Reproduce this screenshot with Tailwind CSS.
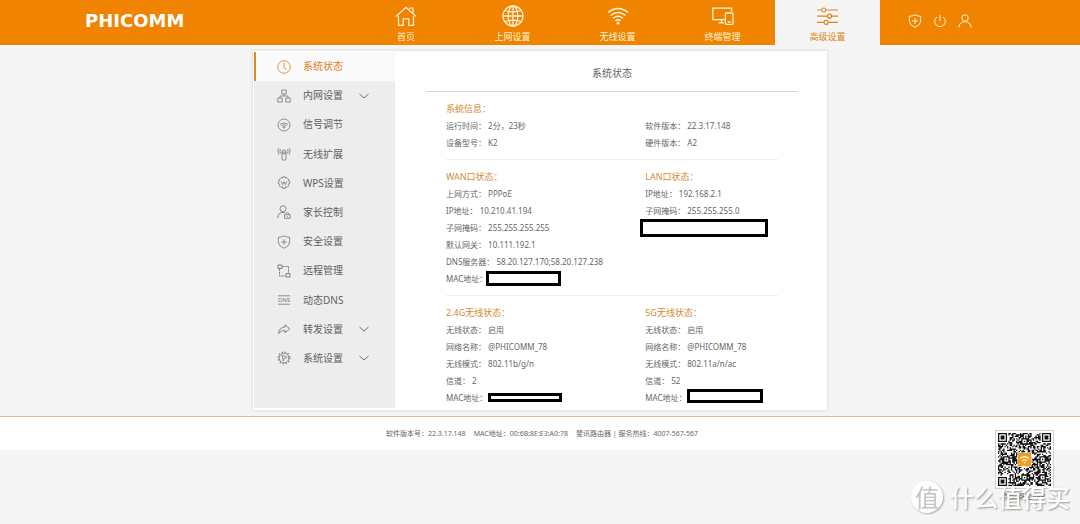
<!DOCTYPE html>
<html lang="zh-CN">
<head>
<meta charset="utf-8">
<meta name="viewport" content="width=device-width, initial-scale=1">
<title>PHICOMM 系统状态</title>
<script src="https://cdn.jsdelivr.net/npm/@tailwindcss/browser@4"></script>
</head>
<body class="relative min-h-screen overflow-x-hidden bg-[#f5f5f5] font-['Noto_Sans','Noto_Sans_CJK_SC',sans-serif] text-[8px] text-[#666]">

<header class="flex h-[45px] bg-[#f08300] text-[#fff3d6]">
  <a href="#" class="flex min-w-0 flex-1 items-center justify-start pb-1 pl-[85px] font-['DejaVu_Sans',sans-serif] text-[18px] leading-none font-bold text-white">PHICOMM</a>
  <nav class="flex text-[9px] leading-3" aria-label="主导航">
    <a href="#" class="flex w-[105px] flex-col items-center gap-1 pt-[5px] pr-[3px]">
      <svg class="size-[22px]" viewBox="0 0 22 22" fill="none" stroke="currentColor" stroke-width="1.2" aria-hidden="true"><path d="M1 11.500 11 2.200 21 11.500M15 4V3h3v5.500M3.500 11v9.400h4.700v-6.600h5.600v6.600h4.700V11"/></svg>
      首页</a>
    <a href="#" class="flex w-[105px] flex-col items-center gap-1 pt-[5px]">
      <svg class="size-[22px]" viewBox="0 0 22 22" fill="none" stroke="currentColor" stroke-width="1.300" aria-hidden="true"><circle cx="11" cy="11" r="10"/><ellipse cx="11" cy="11" rx="4.800" ry="10"/><path d="M11 1v20M1 11h20M3 5.500q8 2.800 16 0M3 16.500q8-2.800 16 0"/></svg>
      上网设置</a>
    <a href="#" class="flex w-[105px] flex-col items-center gap-1 pt-[5px]">
      <svg class="size-[22px]" viewBox="0 0 22 22" fill="none" stroke="currentColor" stroke-width="1.400" aria-hidden="true"><path d="M1 7.500Q11-.5 21 7.500M3.500 10.500q7.500-6 15 0M6 13.300q5-4 10 0M8.300 15.800q2.700-2.100 5.400 0"/><circle cx="11" cy="18" r=".8" fill="currentColor"/></svg>
      无线设置</a>
    <a href="#" class="flex w-[105px] flex-col items-center gap-1 pt-[5px]">
      <svg class="size-[22px]" viewBox="0 0 22 22" fill="none" stroke="currentColor" stroke-width="1.300" aria-hidden="true"><path d="M12.500 14.700H.8V3.200h18.800v3.300M6.500 17.800H12M9.500 14.700v3.100"/><rect x="13.400" y="8" width="7.600" height="11.300" rx="1"/><path d="M15.700 17h3"/></svg>
      终端管理</a>
    <a href="#" aria-current="page" class="flex w-[105px] flex-col items-center gap-1 bg-[#f5f5f5] pt-[5px] text-[#dc8420]">
      <svg class="size-[22px]" viewBox="0 0 22 22" fill="none" stroke="currentColor" stroke-width="1.200" aria-hidden="true"><path d="M0 5h4.500M9.500 5H21M0 11.200h10M15 11.200h6M0 17.400h6.500M11.500 17.400H21"/><circle cx="6.800" cy="5" r="2"/><circle cx="12.500" cy="11.200" r="2"/><circle cx="9" cy="17.400" r="2"/></svg>
      高级设置</a>
  </nav>
  <div class="flex w-[200px] items-center gap-[11px] pb-1 pl-7">
    <button type="button" aria-label="安全"><svg class="size-[14px]" viewBox="0 0 14 14" fill="none" stroke="currentColor" stroke-width="1" aria-hidden="true"><path d="M7 .8Q9.500 2.300 12.700 2.300V7q0 4-5.700 6.300Q1.300 11 1.300 7V2.300Q4.500 2.300 7 .8ZM7 4v6M4 7h6"/></svg></button>
    <button type="button" aria-label="退出"><svg class="size-[14px]" viewBox="0 0 14 14" fill="none" stroke="currentColor" stroke-width="1" aria-hidden="true"><path d="M7 1v6M4 3a5.300 5.300 0 1 0 6 0"/></svg></button>
    <button type="button" aria-label="用户"><svg class="size-[14px]" viewBox="0 0 14 14" fill="none" stroke="currentColor" stroke-width="1" aria-hidden="true"><circle cx="7" cy="4" r="3.200"/><path d="M.8 13.500Q1.500 7.800 7 7.800t6.200 5.700"/></svg></button>
  </div>
</header>

<div class="mx-auto mt-[6px] flex w-full max-w-[574px] bg-white p-px pb-[2px] shadow-[0_0_4px_rgba(0,0,0,0.14)]">
  <aside class="w-[141px] shrink-0 bg-[#ededed]">
    <ul class="grid h-[321px] auto-rows-fr text-[10px] text-[#5f5f5f]">
      <li class="grid"><a href="#" aria-current="page" class="flex items-center gap-3 border-l-2 border-[#e08a22] bg-[#fafafa] pl-[21px] text-[#dc7d1e]">
        <svg class="size-[14px]" viewBox="0 0 14 14" fill="none" stroke="currentColor" stroke-width=".8" aria-hidden="true"><circle cx="7" cy="7" r="6.300"/><path d="M7 2.800V7l2.400 3"/></svg>系统状态</a></li>
      <li class="grid"><a href="#" class="flex items-center gap-3 pl-[23px]">
        <svg class="size-[14px] text-[#757575]" viewBox="0 0 14 14" fill="none" stroke="currentColor" stroke-width=".8" aria-hidden="true"><path d="M4.800 1h4.400v4H4.800zM.8 9h4.400v4H.8zM8.800 9h4.400v4H8.800zM7 5v2M3 9V7h8v2"/></svg><span class="w-12">内网设置</span>
        <svg class="-ml-1 h-[6px] w-[10px]" viewBox="0 0 10 6" fill="none" stroke="currentColor" stroke-width=".9" aria-hidden="true"><path d="M.5 1 5 5l4.500-4"/></svg></a></li>
      <li class="grid"><a href="#" class="flex items-center gap-3 pl-[23px]">
        <svg class="size-[14px] text-[#757575]" viewBox="0 0 14 14" fill="none" stroke="currentColor" stroke-width=".8" aria-hidden="true"><circle cx="7" cy="7" r="6"/><path d="M3 6.300q4-3 8 0M4.300 7.800q2.700-2.200 5.400 0M5.800 9q1.200-1 2.400 0L7 10.300z"/></svg>信号调节</a></li>
      <li class="grid"><a href="#" class="flex items-center gap-3 pl-[23px]">
        <svg class="size-[14px] text-[#757575]" viewBox="0 0 14 14" fill="none" stroke="currentColor" stroke-width=".8" aria-hidden="true"><path d="M5 5.200h4v7.300Q7 14 5 12.500zM5 6.800h4M2 1.200Q-.4 4 2 7.500M3.700 2.300Q2 4.300 3.700 6.500M12 1.200q2.400 2.800 0 6.300M10.300 2.300q1.700 2 0 4.200M5 5.200Q4.800 3 7 3t2 2.200"/></svg>无线扩展</a></li>
      <li class="grid"><a href="#" class="flex items-center gap-3 pl-[23px]">
        <svg class="size-[14px] text-[#757575]" viewBox="0 0 14 14" fill="none" stroke="currentColor" stroke-width=".8" stroke-linejoin="round" aria-hidden="true"><path d="M5.800 .8h2.400l.4 1.400 1.300-.6 1.700 1.700-.6 1.200 1.700.5v2.600l-1.600.6.600 1.500-1.700 1.700-1.400-.7-.4 1.700H5.800l-.4-1.700-1.400.7-1.700-1.700.6-1.500L1.300 7.600V5.200l1.600-.6-.6-1.300L4 1.600l1.400.6zM4.300 5.400l1.300 3.300L7 5.800l1.400 2.900 1.300-3.300"/></svg>WPS设置</a></li>
      <li class="grid"><a href="#" class="flex items-center gap-3 pl-[23px]">
        <svg class="size-[14px] text-[#757575]" viewBox="0 0 14 14" fill="none" stroke="currentColor" stroke-width=".8" aria-hidden="true"><circle cx="6" cy="3.800" r="3"/><path d="M.7 13.200Q1 7.500 6 7.300q1.200 0 2 .4M7.500 9.700h5.700v3.600H7.500zM8.800 9.700V8.400q1.500-1.800 3 0v1.300M10.300 11v1.200"/></svg>家长控制</a></li>
      <li class="grid"><a href="#" class="flex items-center gap-3 pl-[23px]">
        <svg class="size-[14px] text-[#757575]" viewBox="0 0 14 14" fill="none" stroke="currentColor" stroke-width=".8" aria-hidden="true"><path d="M7 .8Q9.500 2.300 12.700 2.300V7q0 4-5.700 6.300Q1.300 11 1.300 7V2.300Q4.500 2.300 7 .8ZM7 4.300v5.400M4.300 7h5.400"/></svg>安全设置</a></li>
      <li class="grid"><a href="#" class="flex items-center gap-3 pl-[23px]">
        <svg class="size-[14px] text-[#757575]" viewBox="0 0 14 14" fill="none" stroke="currentColor" stroke-width=".9" aria-hidden="true"><path d="M1 1h4v3.500H1zM9 9.500h4V13H9z"/><path d="M5.500 2.500h6V9M2.500 5v7H8.500" stroke-dasharray="2.200 .8"/></svg>远程管理</a></li>
      <li class="grid"><a href="#" class="flex items-center gap-3 pl-[23px]">
        <svg class="size-[14px] text-[#757575]" viewBox="0 0 14 14" fill="none" stroke="currentColor" stroke-width=".8" aria-hidden="true"><path d="M1 2.800h12M1 11.200h12"/><text x="7" y="9.200" text-anchor="middle" font-size="6" fill="currentColor" stroke="none">DNS</text></svg>动态DNS</a></li>
      <li class="grid"><a href="#" class="flex items-center gap-3 pl-[23px]">
        <svg class="size-[14px] text-[#757575]" viewBox="0 0 14 14" fill="none" stroke="currentColor" stroke-width=".9" stroke-linejoin="round" aria-hidden="true"><path d="M8 2.800 12.800 6.800 8 10.800V8.500Q4 8.300 1.500 11.500 2 5.500 8 5z"/></svg><span class="w-12">转发设置</span>
        <svg class="-ml-1 h-[6px] w-[10px]" viewBox="0 0 10 6" fill="none" stroke="currentColor" stroke-width=".9" aria-hidden="true"><path d="M.5 1 5 5l4.500-4"/></svg></a></li>
      <li class="grid"><a href="#" class="flex items-center gap-3 pl-[23px]">
        <svg class="size-[14px] text-[#757575]" viewBox="0 0 14 14" fill="none" stroke="currentColor" stroke-width=".8" aria-hidden="true"><circle cx="7" cy="7" r="4.800"/><circle cx="7" cy="7" r="5.900" stroke-width="1.400" stroke-dasharray="1.200 1.889"/><path d="M5 4.200 10 6.300 7.300 7.300 6.300 10z"/></svg><span class="w-12">系统设置</span>
        <svg class="-ml-1 h-[6px] w-[10px]" viewBox="0 0 10 6" fill="none" stroke="currentColor" stroke-width=".9" aria-hidden="true"><path d="M.5 1 5 5l4.500-4"/></svg></a></li>
    </ul>
  </aside>

  <main class="min-w-0 flex-1 pr-7 pb-[2px] pl-[31px] leading-[17px]">
    <h1 class="flex h-10 items-center justify-center border-b border-[#d4d4d4] pt-1 text-[10px]">系统状态</h1>
    <div class="px-5 pt-2">
      <section class="grid grid-cols-[3fr_2fr] border-b border-[#f0f0f0] pb-2">
        <div>
          <h2 class="text-[9px] text-[#d58a35]">系统信息：</h2>
          <p>运行时间： 2分，23秒</p>
          <p>设备型号： K2</p>
        </div>
        <div class="pt-[17px]">
          <p>软件版本： 22.3.17.148</p>
          <p>硬件版本： A2</p>
        </div>
      </section>
      <section class="grid grid-cols-[3fr_2fr] border-b border-[#f0f0f0] pt-2 pb-2">
        <div>
          <h2 class="text-[9px] text-[#d58a35]">WAN口状态：</h2>
          <p>上网方式： PPPoE</p>
          <p>IP地址： 10.210.41.194</p>
          <p>子网掩码： 255.255.255.255</p>
          <p>默认网关： 10.111.192.1</p>
          <p>DNS服务器： 58.20.127.170;58.20.127.238</p>
          <p class="flex h-[17px] items-center"><span class="w-10 whitespace-nowrap">MAC地址：</span><span class="h-[15px] w-[75px] border-3 border-black bg-white"></span></p>
        </div>
        <div>
          <h2 class="text-[9px] text-[#d58a35]">LAN口状态：</h2>
          <p>IP地址： 192.168.2.1</p>
          <p>子网掩码： 255.255.255.0</p>
          <div class="-ml-[5px] h-[18px] w-[128px] border-3 border-black bg-white"></div>
        </div>
      </section>
      <section class="grid grid-cols-[3fr_2fr] pt-2">
        <div>
          <h2 class="text-[9px] text-[#d58a35]">2.4G无线状态：</h2>
          <p>无线状态： 启用</p>
          <p>网络名称： @PHICOMM_78</p>
          <p>无线模式： 802.11b/g/n</p>
          <p>信道： 2</p>
          <p class="flex h-[17px] items-center"><span class="w-[42px] whitespace-nowrap">MAC地址：</span><span class="h-[9px] w-[74px] border-3 border-black bg-white"></span></p>
        </div>
        <div>
          <h2 class="text-[9px] text-[#d58a35]">5G无线状态：</h2>
          <p>无线状态： 启用</p>
          <p>网络名称： @PHICOMM_78</p>
          <p>无线模式： 802.11a/n/ac</p>
          <p>信道： 52</p>
          <p class="flex h-[17px] items-start"><span class="w-[42px] whitespace-nowrap">MAC地址：</span><span class="h-[14px] w-[76px] border-3 border-black bg-white"></span></p>
        </div>
      </section>
    </div>
  </main>
</div>

<footer class="relative mt-[6px] flex h-[34px] items-center justify-center gap-2 border-t border-[#dfb986] bg-white pl-1 text-[7px] leading-3">
  <span>软件版本号：22.3.17.148</span>
  <span>MAC地址：00:6B:8E:E3:A0:78</span>
  <span>斐讯路由器 | 服务热线：4007-567-567</span>
  <figure class="absolute top-[13px] right-[26px] flex w-[59px] flex-col items-center">
    <div class="relative w-full border border-[#d0d0d0] bg-white p-[2px]">
      <svg class="w-full" viewBox="0 0 41 41" role="img" aria-label="二维码"><path id="qr" fill="#111"/><path fill="#fff" d="M15 15h11v11H15z"/><path fill="#f59a1c" d="M15.500 15.500h10v10h-10z"/><path fill="none" stroke="#fff" stroke-width="1" d="M17 19.700q3.500-2.800 7 0M18.700 21.500q1.800-1.400 3.600 0"/><circle cx="20.500" cy="23" r=".6" fill="#fff"/></svg>
    </div>
    <figcaption class="pt-[2px] whitespace-nowrap">斐讯路由APP</figcaption>
  </figure>
</footer>

<div class="absolute top-[481px] right-[10px] flex items-center gap-[7px] font-['Noto_Sans_CJK_SC',sans-serif] leading-8 text-white" aria-hidden="true">
  <span class="flex size-8 items-center justify-center rounded-full bg-white text-[24px] text-[#c4c4c4] shadow-[1px_1px_2px_rgba(0,0,0,0.3)]">值</span>
  <span class="text-[24px] font-medium [text-shadow:1px_1px_2px_rgba(0,0,0,0.4)]">什么值得买</span>
</div>

<script>
  // Builds the QR modules: three finder squares, small alignment squares, and data cells.
  const N = 41;
  const finders = [[0, 0], [N - 7, 0], [0, N - 7]];
  const aligns = [[32, 32], [18, 4], [4, 18], [32, 18], [18, 32]];
  let seed = 20177;
  const next = () => (seed = (seed * 1103515245 + 12345) % 2147483648) / 2147483648;
  let d = "";
  for (let y = 0; y < N; y++) for (let x = 0; x < N; x++) {
    let on = next() < 0.52;
    for (const [a, b] of aligns) {
      const r = Math.max(Math.abs(x - a - 2), Math.abs(y - b - 2));
      if (r <= 2) on = r !== 1;
    }
    for (const [a, b] of finders) {
      const r = Math.max(Math.abs(x - a - 3), Math.abs(y - b - 3));
      if (r <= 4) on = r !== 2 && r !== 4;
    }
    if (on) d += `M${x} ${y}h1v1h-1z`;
  }
  document.getElementById("qr").setAttribute("d", d);
</script>
</body>
</html>
